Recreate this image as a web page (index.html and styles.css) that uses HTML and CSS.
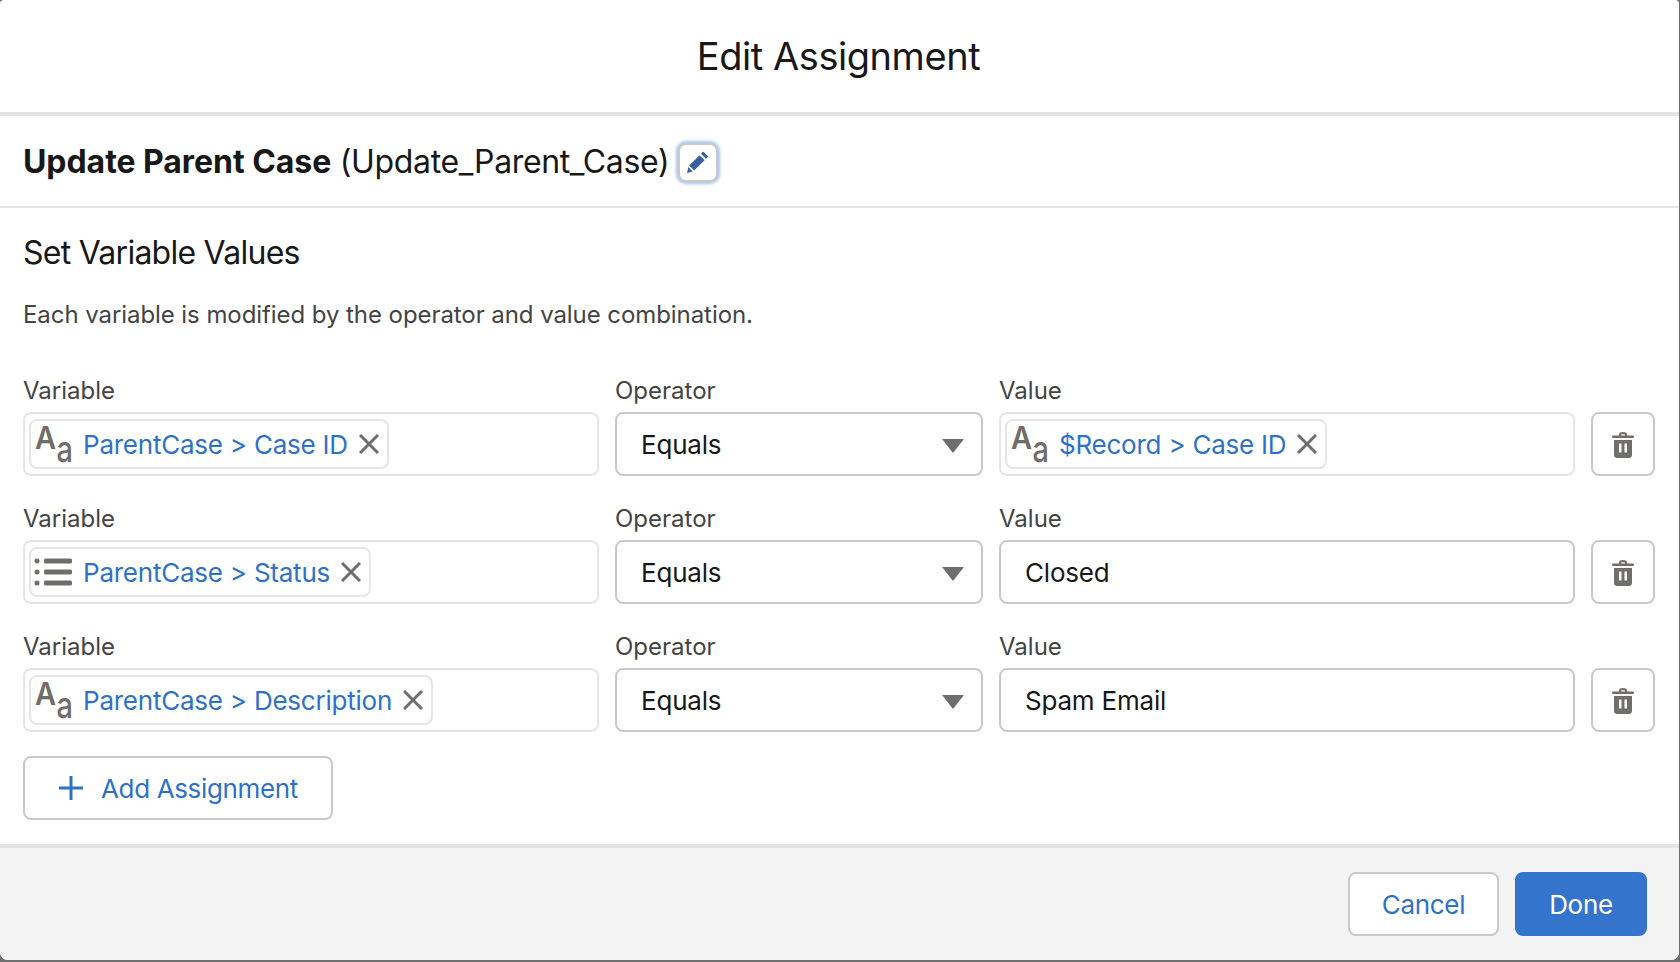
FILE: index.html
```html
<!DOCTYPE html>
<html lang="en">
<head>
  <meta charset="UTF-8" />
  <title>Edit Assignment</title>
  <link rel="stylesheet" href="styles.css">
</head>
<body>
  <div class="modal">
    <header class="modal-header">Edit Assignment</header>

    <div class="name-row">
      <span class="name"><b>Update Parent Case</b> (Update_Parent_Case)</span>
      <button class="edit-btn">
        <svg width="24" height="24" viewBox="0 0 24 24"><path d="M17.2 1.6l5 5-2.2 2.2-5-5zM13.6 5.2l5 5L8.2 20.6l-5-5zM2.4 17l4.4 4.4L1 23z"/></svg>
      </button>
    </div>

    <main class="modal-body">
      <h2>Set Variable Values</h2>
      <p class="help">Each variable is modified by the operator and value combination.</p>

      <div class="rows">
        <div class="field">
          <label>Variable</label>
          <div class="box light">
            <span class="chip">
              <span class="type-aa"><span class="big">A</span><span class="small">a</span></span>
              <span class="chip-text">ParentCase &gt; Case ID</span>
              <svg class="x" width="20" height="20" viewBox="0 0 20 20"><path d="M1 1l18 18M19 1L1 19"/></svg>
            </span>
          </div>
        </div>
        <div class="field">
          <label>Operator</label>
          <div class="box select">Equals<span class="caret"></span></div>
        </div>
        <div class="field">
          <label>Value</label>
          <div class="box light">
            <span class="chip">
              <span class="type-aa"><span class="big">A</span><span class="small">a</span></span>
              <span class="chip-text">$Record &gt; Case ID</span>
              <svg class="x" width="20" height="20" viewBox="0 0 20 20"><path d="M1 1l18 18M19 1L1 19"/></svg>
            </span>
          </div>
        </div>
        <button class="trash-btn">
          <svg width="24" height="28" viewBox="0 0 24 28"><path d="M8 6V4.5C8 2.8 9.2 2 12 2s4 .8 4 2.5V6h-2V4.4c-.4-.3-3.6-.3-4 0V6z"/><rect x="1" y="5.5" width="22" height="2.4" rx="1"/><path fill-rule="evenodd" d="M3 10h18v15c0 1.6-1.2 3-3 3H6c-1.8 0-3-1.4-3-3zM8 13.5v9h2.500v-9zM13.5 13.5v9H16v-9z"/></svg>
        </button>

        <div class="field">
          <label>Variable</label>
          <div class="box light">
            <span class="chip">
              <svg class="type-list" width="38" height="30" viewBox="0 0 38 30"><circle cx="3" cy="4" r="2.5"/><circle cx="3" cy="15" r="2.5"/><circle cx="3" cy="26" r="2.5"/><rect x="10" y="1.5" width="28" height="5" rx="1.5"/><rect x="10" y="12.5" width="28" height="5" rx="1.5"/><rect x="10" y="23.5" width="28" height="5" rx="1.5"/></svg>
              <span class="chip-text">ParentCase &gt; Status</span>
              <svg class="x" width="20" height="20" viewBox="0 0 20 20"><path d="M1 1l18 18M19 1L1 19"/></svg>
            </span>
          </div>
        </div>
        <div class="field">
          <label>Operator</label>
          <div class="box select">Equals<span class="caret"></span></div>
        </div>
        <div class="field">
          <label>Value</label>
          <div class="box text">Closed</div>
        </div>
        <button class="trash-btn">
          <svg width="24" height="28" viewBox="0 0 24 28"><path d="M8 6V4.5C8 2.8 9.2 2 12 2s4 .8 4 2.5V6h-2V4.4c-.4-.3-3.6-.3-4 0V6z"/><rect x="1" y="5.5" width="22" height="2.4" rx="1"/><path fill-rule="evenodd" d="M3 10h18v15c0 1.6-1.2 3-3 3H6c-1.8 0-3-1.4-3-3zM8 13.5v9h2.500v-9zM13.5 13.5v9H16v-9z"/></svg>
        </button>

        <div class="field">
          <label>Variable</label>
          <div class="box light">
            <span class="chip">
              <span class="type-aa"><span class="big">A</span><span class="small">a</span></span>
              <span class="chip-text">ParentCase &gt; Description</span>
              <svg class="x" width="20" height="20" viewBox="0 0 20 20"><path d="M1 1l18 18M19 1L1 19"/></svg>
            </span>
          </div>
        </div>
        <div class="field">
          <label>Operator</label>
          <div class="box select">Equals<span class="caret"></span></div>
        </div>
        <div class="field">
          <label>Value</label>
          <div class="box text">Spam Email</div>
        </div>
        <button class="trash-btn">
          <svg width="24" height="28" viewBox="0 0 24 28"><path d="M8 6V4.5C8 2.8 9.2 2 12 2s4 .8 4 2.5V6h-2V4.4c-.4-.3-3.6-.3-4 0V6z"/><rect x="1" y="5.5" width="22" height="2.4" rx="1"/><path fill-rule="evenodd" d="M3 10h18v15c0 1.6-1.2 3-3 3H6c-1.8 0-3-1.4-3-3zM8 13.5v9h2.500v-9zM13.5 13.5v9H16v-9z"/></svg>
        </button>
      </div>

      <button class="add-btn">
        <svg width="26" height="26" viewBox="0 0 26 26"><path d="M13 1v24M1 13h24"/></svg>
        Add Assignment
      </button>
    </main>

    <footer class="modal-footer">
      <button class="btn">Cancel</button>
      <button class="btn primary">Done</button>
    </footer>
  </div>
</body>
</html>
```

FILE: styles.css
```css
* {
  box-sizing: border-box;
}
html, body {
  height: 100%;
}
body {
  margin: 0;
  background: #6f6f6f;
  font-family: Inter, "Noto Sans", sans-serif;
  color: #181818;
  overflow: hidden;
}
button {
  font-family: inherit;
  cursor: pointer;
}
.modal {
  width: 1679px;
  height: 960px;
  background: #fff;
  border-radius: 4px 4px 8px 8px;
  overflow: hidden;
  display: flex;
  flex-direction: column;
}
.modal-header {
  height: 116px;
  flex: none;
  border-bottom: 4px solid #e5e5e5;
  padding-right: 2px;
  display: flex;
  align-items: center;
  justify-content: center;
  font-size: 38px;
  letter-spacing: -0.45px;
}
.name-row {
  height: 92px;
  flex: none;
  border-bottom: 2px solid #e5e5e5;
  padding: 0 23px;
  display: flex;
  align-items: center;
  gap: 9px;
}
.name {
  font-size: 32px;
  letter-spacing: -0.36px;
}
.name b {
  letter-spacing: -0.05px;
}
.edit-btn {
  width: 40px;
  height: 39px;
  margin-top: 2px;
  padding: 0;
  background: #fff;
  border: 2px solid #c9c9c9;
  border-radius: 8px;
  box-shadow: 0 0 3px 2px #a9c4ee;
  display: flex;
  align-items: center;
  justify-content: center;
}
.edit-btn path {
  fill: #3a5f9f;
}
.modal-body {
  flex: 1;
  padding: 25px 0 0 23px;
}
h2 {
  margin: 0;
  font-size: 32px;
  line-height: 40px;
  font-weight: 400;
  letter-spacing: -0.75px;
}
.help {
  margin: 24px 0 0;
  font-size: 24px;
  line-height: 36px;
  letter-spacing: -0.07px;
  color: #444;
}
.rows {
  margin-top: 41px;
  display: grid;
  grid-template-columns: 576px 368px 576px 64px;
  column-gap: 16px;
  row-gap: 26px;
  align-items: end;
}
.field label {
  display: block;
  font-size: 24px;
  line-height: 32px;
  padding-top: 1px;
  margin-bottom: 5px;
  color: #444;
}
.box {
  height: 64px;
  border: 2px solid #c9c9c9;
  border-radius: 8px;
  background: #fff;
  display: flex;
  align-items: center;
  font-size: 26px;
  letter-spacing: -0.2px;
}
.box.light {
  border-color: #e5e5e5;
  padding-left: 4px;
}
.box.select {
  padding: 1px 17px 0 24px;
  justify-content: space-between;
}
.box.text {
  padding: 1px 24px 0;
}
.caret {
  width: 0;
  height: 0;
  margin-top: 2px;
  border-left: 11px solid transparent;
  border-right: 11px solid transparent;
  border-top: 14px solid #706e6b;
}
.chip {
  height: 50px;
  border: 2px solid #e5e5e5;
  border-radius: 8px;
  padding: 0 8px 0 4px;
  display: flex;
  align-items: center;
}
.chip-text {
  color: #2e71c9;
  margin: 1px 11px 0 10px;
  letter-spacing: -0.23px;
  white-space: nowrap;
}
.x {
  flex: none;
}
.x path {
  stroke: #706e6b;
  stroke-width: 3;
  fill: none;
}
.type-aa {
  width: 38px;
  height: 46px;
  position: relative;
  color: #706e6b;
  font-weight: 600;
  letter-spacing: 0;
  flex: none;
}
.type-aa .big {
  position: absolute;
  left: 0;
  top: 0;
  font-size: 29px;
  line-height: 36px;
  transform: scaleY(1.1);
  transform-origin: 50% 75%;
}
.type-aa .small {
  position: absolute;
  right: 0;
  bottom: -3px;
  font-size: 29px;
  line-height: 36px;
  font-weight: 500;
  transform: scaleY(1.28);
  transform-origin: 50% 78%;
}
.type-list {
  flex: none;
  fill: #706e6b;
  margin-left: -1px;
  margin-right: 1px;
}
.trash-btn {
  height: 64px;
  padding: 0;
  background: #fff;
  border: 2px solid #c9c9c9;
  border-radius: 8px;
  display: flex;
  align-items: center;
  justify-content: center;
}
.trash-btn svg {
  fill: #706e6b;
}
.add-btn {
  margin-top: 24px;
  width: 310px;
  height: 64px;
  background: #fff;
  border: 2px solid #c9c9c9;
  border-radius: 8px;
  color: #2e71c9;
  font-size: 26px;
  letter-spacing: -0.36px;
  padding: 0 0 0 33px;
  display: flex;
  align-items: center;
  gap: 17px;
}
.add-btn path {
  stroke: #2e71c9;
  stroke-width: 3;
  fill: none;
}
.modal-footer {
  height: 116px;
  flex: none;
  background: #f3f3f3;
  border-top: 4px solid #e5e5e5;
  display: flex;
  justify-content: flex-end;
  align-items: center;
  gap: 16px;
  padding: 0 32px 0 0;
}
.btn {
  height: 64px;
  width: 151px;
  background: #fff;
  border: 2px solid #c9c9c9;
  border-radius: 8px;
  color: #2e71c9;
  font-size: 26px;
  letter-spacing: -0.3px;
  padding-top: 2px;
}
.btn.primary {
  width: 132px;
  background: #3574cc;
  border-color: #3574cc;
  color: #fff;
}
```
